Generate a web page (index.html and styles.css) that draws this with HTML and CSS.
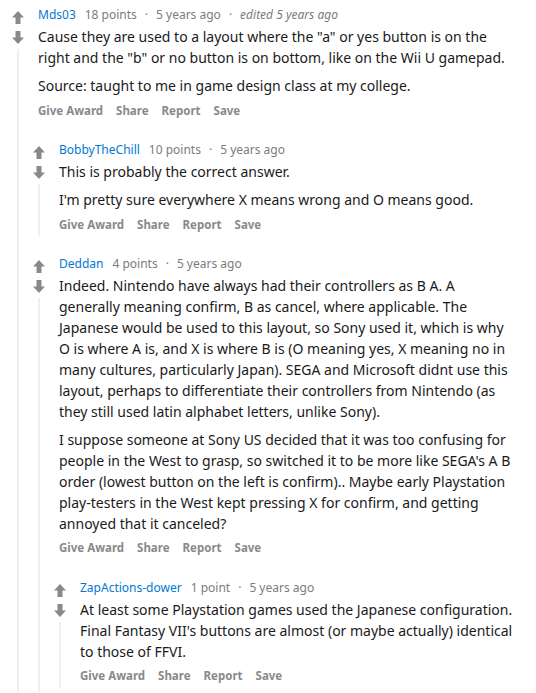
FILE: index.html
```html
<!DOCTYPE html>
<html lang="en">
<head>
<meta charset="utf-8">
<title>Comments</title>
<link rel="stylesheet" href="styles.css">
</head>
<body>
<div class="page">
  <div class="comment">
    <div class="rail">
      <svg class="vote" viewBox="0 0 14 13" width="14" height="13"><polygon points="7,0 13,6.5 9.5,6.5 9.5,13 4.5,13 4.5,6.5 1,6.5"/></svg>
      <svg class="vote down" viewBox="0 0 14 13" width="14" height="13"><polygon points="7,13 13,6.5 9.5,6.5 9.5,0 4.5,0 4.5,6.5 1,6.5"/></svg>
      <div class="line"></div>
    </div>
    <div class="main">
      <div class="meta"><span class="author">Mds03</span><span>18 points</span><span class="sep">·</span><span>5 years ago</span><span class="sep">·</span><span class="edited">edited 5 years ago</span></div>
      <div class="body">
        <p>Cause they are used to a layout where the "a" or yes button is on the right and the "b" or no button is on bottom, like on the Wii U gamepad.</p>
        <p>Source: taught to me in game design class at my college.</p>
      </div>
      <div class="actions"><span>Give Award</span><span>Share</span><span>Report</span><span>Save</span></div>
      <div class="children">
        <div class="comment">
          <div class="rail">
            <svg class="vote" viewBox="0 0 14 13" width="14" height="13"><polygon points="7,0 13,6.5 9.5,6.5 9.5,13 4.5,13 4.5,6.5 1,6.5"/></svg>
            <svg class="vote down" viewBox="0 0 14 13" width="14" height="13"><polygon points="7,13 13,6.5 9.5,6.5 9.5,0 4.5,0 4.5,6.5 1,6.5"/></svg>
            <div class="line"></div>
          </div>
          <div class="main">
            <div class="meta"><span class="author">BobbyTheChill</span><span>10 points</span><span class="sep">·</span><span>5 years ago</span></div>
            <div class="body">
              <p>This is probably the correct answer.</p>
              <p>I'm pretty sure everywhere X means wrong and O means good.</p>
            </div>
            <div class="actions"><span>Give Award</span><span>Share</span><span>Report</span><span>Save</span></div>
          </div>
        </div>
        <div class="comment">
          <div class="rail">
            <svg class="vote" viewBox="0 0 14 13" width="14" height="13"><polygon points="7,0 13,6.5 9.5,6.5 9.5,13 4.5,13 4.5,6.5 1,6.5"/></svg>
            <svg class="vote down" viewBox="0 0 14 13" width="14" height="13"><polygon points="7,13 13,6.5 9.5,6.5 9.5,0 4.5,0 4.5,6.5 1,6.5"/></svg>
            <div class="line"></div>
          </div>
          <div class="main">
            <div class="meta"><span class="author">Deddan</span><span>4 points</span><span class="sep">·</span><span>5 years ago</span></div>
            <div class="body">
              <p>Indeed. Nintendo have always had their controllers as B A. A generally meaning confirm, B as cancel, where applicable. The Japanese would be used to this layout, so Sony used it, which is why O is where A is, and X is where B is (O meaning yes, X meaning no in many cultures, particularly Japan). SEGA and Microsoft didnt use this layout, perhaps to differentiate their controllers from Nintendo (as they still used latin alphabet letters, unlike Sony).</p>
              <p>I suppose someone at Sony US decided that it was too confusing for people in the West to grasp, so switched it to be more like SEGA's A B order (lowest button on the left is confirm).. Maybe early Playstation play-testers in the West kept pressing X for confirm, and getting annoyed that it canceled?</p>
            </div>
            <div class="actions"><span>Give Award</span><span>Share</span><span>Report</span><span>Save</span></div>
            <div class="children">
              <div class="comment">
                <div class="rail">
                  <svg class="vote" viewBox="0 0 14 13" width="14" height="13"><polygon points="7,0 13,6.5 9.5,6.5 9.5,13 4.5,13 4.5,6.5 1,6.5"/></svg>
                  <svg class="vote down" viewBox="0 0 14 13" width="14" height="13"><polygon points="7,13 13,6.5 9.5,6.5 9.5,0 4.5,0 4.5,6.5 1,6.5"/></svg>
                  <div class="line"></div>
                </div>
                <div class="main">
                  <div class="meta"><span class="author">ZapActions-dower</span><span>1 point</span><span class="sep">·</span><span>5 years ago</span></div>
                  <div class="body">
                    <p>At least some Playstation games used the Japanese configuration. Final Fantasy VII's buttons are almost (or maybe actually) identical to those of FFVI.</p>
                  </div>
                  <div class="actions"><span>Give Award</span><span>Share</span><span>Report</span><span>Save</span></div>
                </div>
              </div>
            </div>
          </div>
        </div>
      </div>
    </div>
  </div>
</div>
</body>
</html>
```

FILE: styles.css
```css
html, body {
  margin: 0;
  padding: 0;
  background: #ffffff;
}

.page {
  padding: 0 20px 0 7px;
  font-family: "Noto Sans", "Open Sans", sans-serif;
  color: #1a1a1b;
}

.comment {
  display: flex;
  padding-top: 4px;
  padding-bottom: 4px;
}

.rail {
  flex: none;
  width: 21px;
  margin-right: 10px;
  display: flex;
  flex-direction: column;
  align-items: center;
  padding-top: 7px;
}

.vote {
  display: block;
  fill: #878a8c;
}

.vote.down {
  margin-top: 7px;
}

.line {
  flex: 1;
  width: 2px;
  margin-top: 5px;
  background: #edeff1;
}

.main {
  flex: 1;
  min-width: 0;
}

.meta {
  font-size: 12px;
  line-height: 22px;
  color: #7c7c7c;
  white-space: nowrap;
}

.author {
  color: #0079d3;
  margin-right: 9px;
}

.sep {
  margin: 0 8px;
}

.edited {
  font-style: italic;
}

.body {
  font-size: 14px;
  line-height: 21px;
}

.body p {
  margin: 0;
}

.body p + p {
  margin-top: 7px;
}

.actions {
  display: flex;
  gap: 13px;
  margin-top: 2px;
  height: 24px;
  align-items: center;
  font-size: 11.5px;
  font-weight: 700;
  color: #878a8c;
}

.children {
  margin-left: -10px;
  padding-top: 4.5px;
}

.children > .comment {
  margin-top: 8.5px;
}
```
